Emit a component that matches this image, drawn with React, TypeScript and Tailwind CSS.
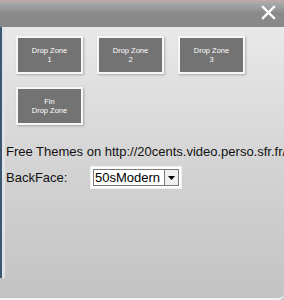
const zones = [
  ["Drop Zone", "1"],
  ["Drop Zone", "2"],
  ["Drop Zone", "3"],
  ["Fin", "Drop Zone"],
];

export default function App() {
  return (
    <div className="w-[284px] h-[300px] overflow-hidden bg-[#c8c8c8] font-['Liberation_Sans',Arial,sans-serif] flex flex-col">
      {/* title bar */}
      <div className="h-[27px] shrink-0 bg-[linear-gradient(#c2a9aa_0px,#a3a6a4_4px,#96999a_9px,#8a8a8a_13px,#888888_27px)] flex justify-end items-start pr-[8px] pt-[5px]">
        <svg width="15" height="15" viewBox="0 0 15 15">
          <path d="M2 2 L13 13 M13 2 L2 13" stroke="#ffffff" strokeWidth="2.4" strokeLinecap="square" />
        </svg>
      </div>

      {/* body */}
      <div className="flex-1 flex rounded-br-[6px] border-b-[2px] border-b-[#f4f4f4] bg-[linear-gradient(#e9e9e9,#d2d2d2_55%,#c3c3c3)]">
        <div className="w-[5px] shrink-0 flex">
          <div className="w-[2px] h-[251px] bg-[#3e5770]" />
          <div className="w-[3px] h-[251px] bg-[#dfe3e6]" />
        </div>
        <div className="flex-1 pl-[1px] pt-[9px] overflow-hidden">
          <div className="grid grid-cols-[67px_67px_67px] gap-x-[14px] gap-y-[13px] pl-[10px]">
            {zones.map(([a, b]) => (
              <div
                key={a + b}
                className="h-[38px] border-2 border-[#f7f7f7] bg-[#737373] shadow-[1px_1px_2px_rgba(0,0,0,0.25)] flex flex-col items-center justify-center text-white text-[7.5px] leading-[9px]"
              >
                <span>{a}</span>
                <span>{b}</span>
              </div>
            ))}
          </div>
          <div className="mt-[19px] text-[13px] leading-[15px] text-[#111] whitespace-nowrap">
            Free Themes on http://20cents.video.perso.sfr.fr/
          </div>
          <div className="mt-[7px] flex items-center text-[13px] text-[#111]">
            <span className="w-[84px]">BackFace:</span>
            <div className="w-[92px] h-[23px] bg-white border border-[#f0f0f0] p-[2px] flex">
              <div className="flex-1 flex items-center border border-[#7a7a7a] border-r-0">
                <span className="pl-[1px] text-[13px] text-black">50sModern</span>
              </div>
              <div className="w-[15px] border border-[#7a7a7a] bg-[#f0f0f0] flex items-center justify-center">
                <svg width="7" height="4" viewBox="0 0 7 4">
                  <path d="M0 0 H7 L3.5 4 Z" fill="#000" />
                </svg>
              </div>
            </div>
          </div>
        </div>
      </div>
    </div>
  );
}
